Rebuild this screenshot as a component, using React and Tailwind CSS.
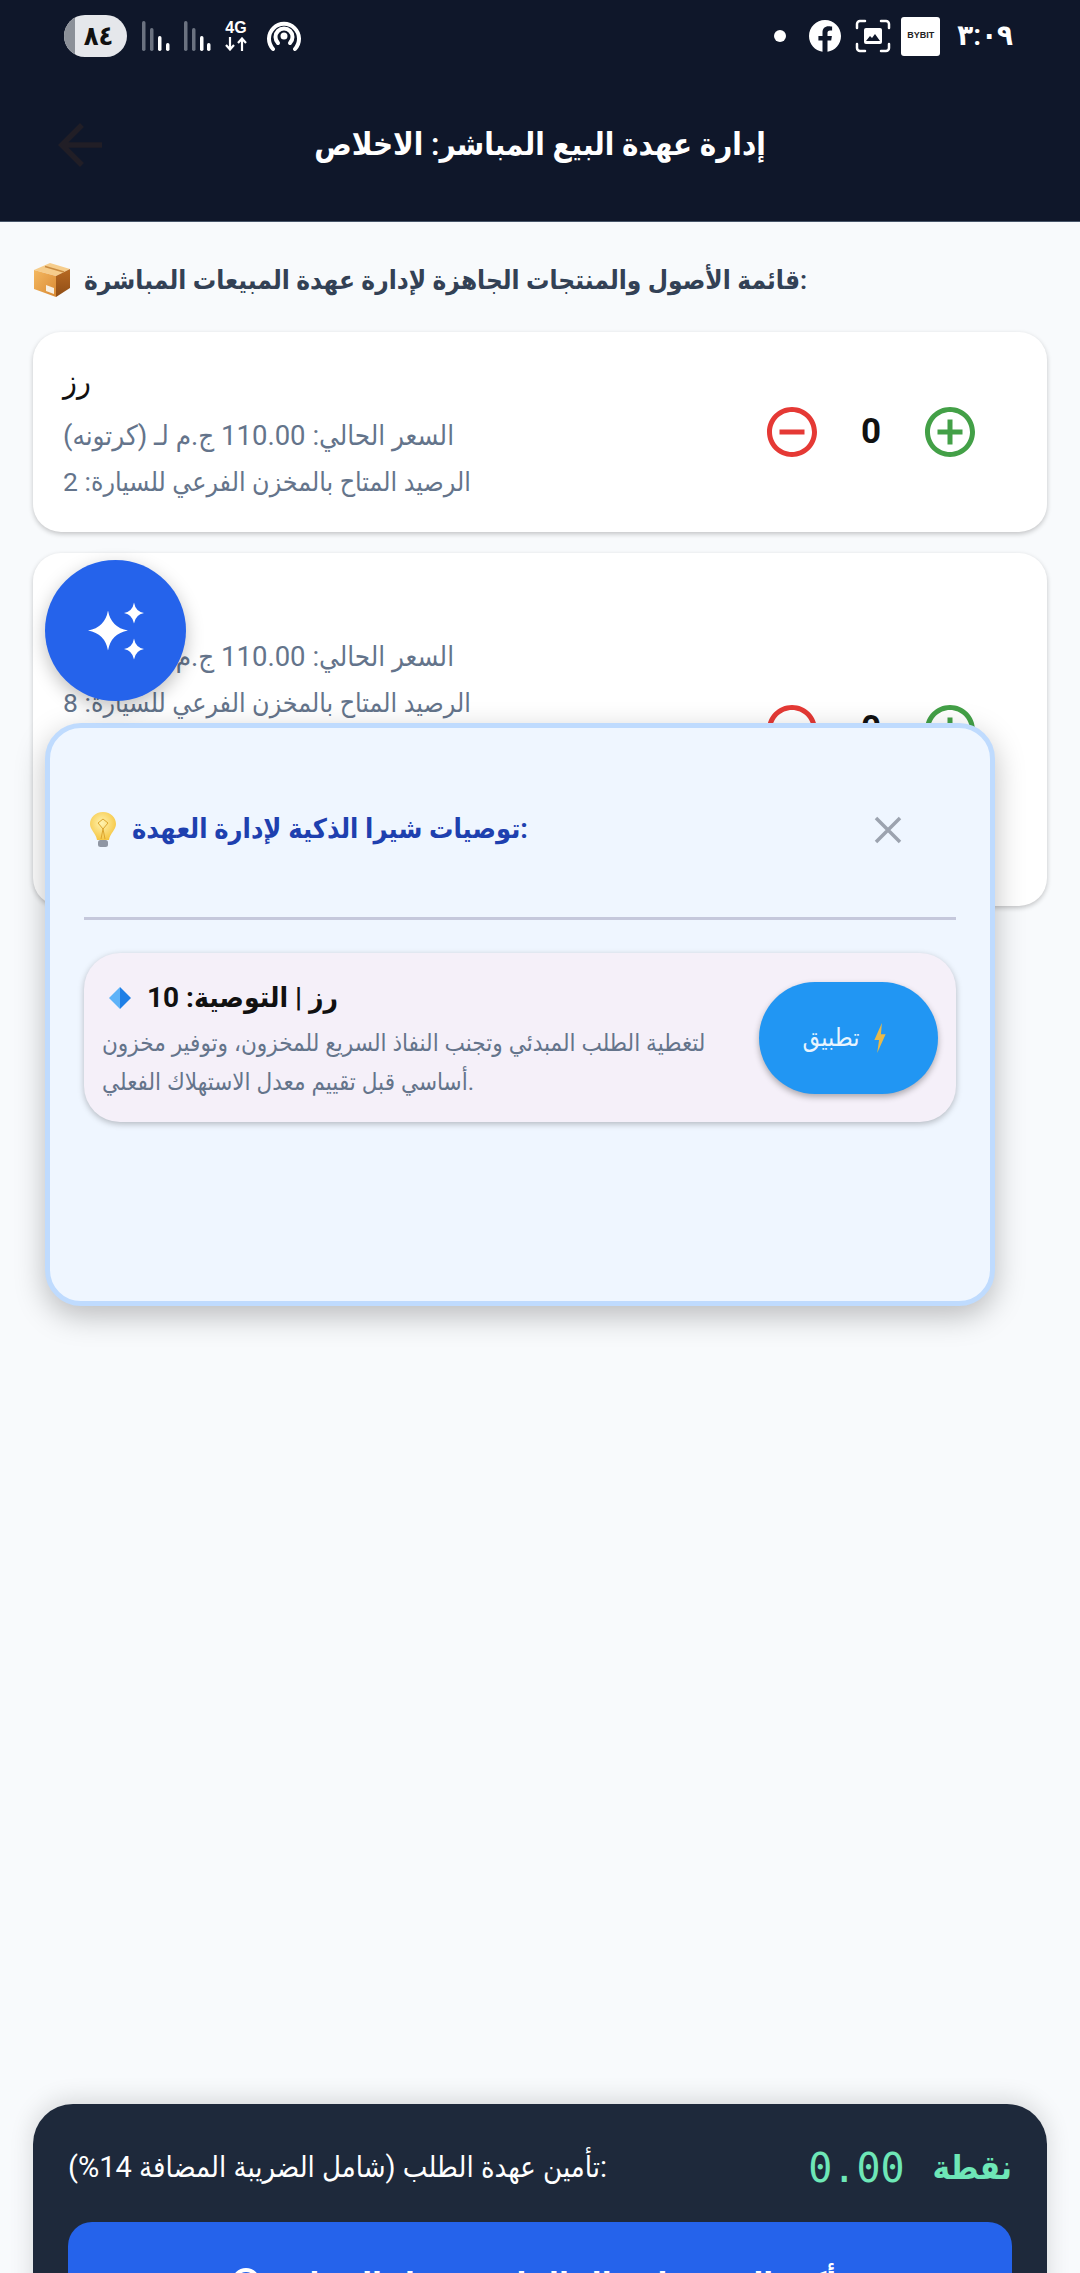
const ar = { fontFamily: 'Roboto, "DejaVu Sans Condensed", "DejaVu Sans", sans-serif' };

function MinusIcon() {
  return (
    <svg viewBox="0 0 24 24" className="w-[60px] h-[60px] text-[#e53935]" fill="currentColor">
      <path d="M7 11v2h10v-2H7zm5-9C6.48 2 2 6.48 2 12s4.48 10 10 10 10-4.48 10-10S17.52 2 12 2zm0 18c-4.41 0-8-3.59-8-8s3.59-8 8-8 8 3.59 8 8-3.59 8-8 8z" />
    </svg>
  );
}
function PlusIcon() {
  return (
    <svg viewBox="0 0 24 24" className="w-[60px] h-[60px] text-[#43a047]" fill="currentColor">
      <path d="M13 7h-2v4H7v2h4v4h2v-4h4v-2h-4V7zm-1-5C6.48 2 2 6.48 2 12s4.48 10 10 10 10-4.48 10-10S17.52 2 12 2zm0 18c-4.41 0-8-3.59-8-8s3.59-8 8-8 8 3.59 8 8-3.59 8-8 8z" />
    </svg>
  );
}
function Box() {
  return (
    <svg viewBox="0 0 38 36" className="w-[38px] h-[36px] shrink-0">
      <defs>
        <linearGradient id="boxl" x1="0" y1="0" x2="1" y2="1"><stop offset="0" stopColor="#f4b860" /><stop offset="1" stopColor="#d98a35" /></linearGradient>
        <linearGradient id="boxr" x1="0" y1="0" x2="0" y2="1"><stop offset="0" stopColor="#b86a22" /><stop offset="1" stopColor="#8f4d16" /></linearGradient>
      </defs>
      <path d="M1 8 L17 1 L37 7 L23 14Z" fill="#f6cd8c" />
      <path d="M1 8 L23 14 V35 L1 27Z" fill="url(#boxl)" />
      <path d="M23 14 L37 7 V26 L23 35Z" fill="url(#boxr)" />
      <path d="M12 4.500 L31 10" stroke="#c98a3f" strokeWidth="1.500" />
      <path d="M13 23 L21 26 V32 L13 29Z" fill="#f7efe2" />
    </svg>
  );
}
function Bulb() {
  return (
    <svg viewBox="0 0 28 38" className="w-[28px] h-[38px] shrink-0">
      <defs>
        <radialGradient id="bulbg" cx="0.45" cy="0.4" r="0.65"><stop offset="0" stopColor="#fff3b0" /><stop offset="1" stopColor="#f5c33b" /></radialGradient>
      </defs>
      <path d="M14 1 C6 1 1 7 1 13 C1 19 7 22 8 29 H20 C21 22 27 19 27 13 C27 7 22 1 14 1Z" fill="url(#bulbg)" />
      <path d="M9 12 L14 8 L19 12 L14 18 Z M14 18 L12 28 M14 18 L16 28" fill="none" stroke="#dca52e" strokeWidth="1" />
      <rect x="9" y="29" width="10" height="7" rx="2.500" fill="#8f96a3" />
    </svg>
  );
}
function Row({ name, stock, extra }) {
  return (
    <div className="flex items-center bg-white rounded-[28px] shadow-[0_2px_5px_rgba(0,0,0,0.22)] pl-[30px] pr-[67px] mb-[21px]">
      <div className={extra ? "flex-1 pt-[28px] pb-[180px]" : "flex-1 pt-[28px] pb-[27px]"}>
        <div className="text-[32px] leading-[42px] font-medium text-[#111]">{name}</div>
        <div className="text-[27.5px] leading-[46px] mt-[11px] text-[#64748b]">السعر الحالي: 110.00 ج.م لـ (كرتونه)</div>
        <div className="text-[26.5px] leading-[46px] text-[#64748b]">الرصيد المتاح بالمخزن الفرعي للسيارة: {stock}</div>
      </div>
      <div className="flex items-center">
        <MinusIcon />
        <div className="w-[98px] text-center text-[35px] font-bold text-[#111]">0</div>
        <PlusIcon />
      </div>
    </div>
  );
}

export default function App() {
  return (
    <div dir="ltr" style={ar} className="relative w-[1080px] h-[2273px] overflow-hidden bg-[#f8fafc] flex flex-col">
      <div className="bg-[#0f172a] h-[222px] shrink-0 border-b border-[#475569]">
        <div className="h-[72px] flex items-center justify-between pl-[64px] pr-[67px] text-white">
          <div className="flex items-center">
            <div className="relative overflow-hidden w-[63px] h-[42px] rounded-full bg-[#e5e7eb] text-[#111] text-[27px] font-semibold flex items-center justify-center mr-[14px]">
              <div className="absolute left-0 top-0 bottom-0 w-[11px] bg-[#8b9098]" />
              <span className="relative pl-[6px]">٨٤</span>
            </div>
            <svg viewBox="0 0 72 30" className="w-[72px] h-[30px] mr-[10px]">
              <g fill="#6b7280"><rect x="1" y="0" width="3.500" height="30" rx="1.700" /><rect x="9" y="7" width="3.500" height="23" rx="1.700" /></g>
              <rect x="17" y="15" width="3.500" height="15" rx="1.700" fill="#fff" />
              <rect x="25" y="22" width="3.500" height="8" rx="1.700" fill="#fff" />
              <g fill="#6b7280"><rect x="43" y="0" width="3.500" height="30" rx="1.700" /><rect x="51" y="7" width="3.500" height="23" rx="1.700" /></g>
              <rect x="59" y="15" width="3.500" height="15" rx="1.700" fill="#fff" />
              <rect x="66" y="22" width="3.500" height="8" rx="1.700" fill="#fff" />
            </svg>
            <div className="w-[26px] flex flex-col items-center mr-[18px] mt-[-2px]">
              <div className="text-[16px] leading-[15px] font-bold font-['Liberation_Sans',sans-serif]">4G</div>
              <svg viewBox="0 0 24 14" className="w-[24px] h-[14px] mt-[2px]" fill="none" stroke="#fff" strokeWidth="2.200">
                <path d="M6 0 V12 M2 8 L6 12.500 L10 8" />
                <path d="M18 14 V2 M14 6 L18 1.500 L22 6" />
              </svg>
            </div>
            <svg viewBox="0 0 34 32" className="w-[34px] h-[32px]" fill="none" stroke="#fff" strokeWidth="4" strokeLinecap="round">
              <path d="M6 29 A15 15 0 1 1 28 29" /><path d="M11 23 A8.500 8.500 0 1 1 23 23" /><circle cx="17" cy="16" r="1.500" fill="#fff" />
            </svg>
          </div>
          <div className="flex items-center">
            <div className="w-[12px] h-[12px] rounded-full bg-white mr-[23px]" />
            <svg viewBox="0 0 32 32" className="w-[32px] h-[32px] mr-[14px]" fill="#fff">
              <path d="M32 16C32 7.2 24.8 0 16 0S0 7.2 0 16c0 8 5.900 14.600 13.500 15.800V20.600H9.400V16h4.100v-3.500c0-4 2.400-6.200 6-6.200 1.800 0 3.600.3 3.600.3v3.900h-2c-2 0-2.600 1.200-2.600 2.500v3h4.400l-.7 4.600h-3.700v11.200C26.100 30.600 32 24 32 16z" />
            </svg>
            <svg viewBox="0 0 36 34" className="w-[36px] h-[34px] mr-[10px]" fill="none" stroke="#fff" strokeWidth="2.500" strokeLinecap="round">
              <path d="M2 9V5a3 3 0 0 1 3-3h5M26 2h5a3 3 0 0 1 3 3v4M34 25v4a3 3 0 0 1-3 3h-5M10 32H5a3 3 0 0 1-3-3v-4" />
              <rect x="9" y="9" width="18" height="16" rx="2" fill="#fff" stroke="none" />
              <path d="M11 22l4-5 2 2 3-4 5 7z" fill="#0f172a" stroke="none" />
            </svg>
            <div className="w-[39px] h-[39px] bg-white rounded-[3px] text-[#222] text-[9px] font-bold flex items-center justify-center mr-[17px] font-['Liberation_Sans',sans-serif]">BYBIT</div>
            <div className="text-[29px] font-semibold">٣:٠٩</div>
          </div>
        </div>
        <div className="relative h-[150px] flex items-center justify-center">
          <svg viewBox="0 0 24 24" className="absolute left-[47px] top-[40px] w-[66px] h-[66px]" fill="#211e26"><path d="M20 11H7.830l5.590-5.590L12 4l-8 8 8 8 1.410-1.410L7.830 13H20v-2z" /></svg>
          <h1 className="text-[31px] font-semibold text-white -mt-[4px]">إدارة عهدة البيع المباشر: الاخلاص</h1>
        </div>
      </div>
      <div className="flex-1 flex flex-col px-[33px] pt-[40px]">
        <div className="flex items-center gap-[13px] h-[36px] mb-[34px] text-[26px] font-semibold text-[#334155]">
          <Box />
          <span>قائمة الأصول والمنتجات الجاهزة لإدارة عهدة المبيعات المباشرة:</span>
        </div>
        <Row name="رز" stock="2" />
        <Row name="سكر" stock="8" extra />
        <div className="mt-auto -mb-[131px] shrink-0 h-[300px] bg-[#1e293b] rounded-[40px] shadow-[0_-4px_24px_rgba(0,0,0,0.14)] px-[35px] pt-[42px]">
          <div className="flex items-center justify-between h-[44px] mb-[32px]">
            <span className="text-[29px] text-white">تأمين عهدة الطلب (شامل الضريبة المضافة 14%):</span>
            <span className="flex items-center gap-[28px] text-[#6ee7b7] font-semibold text-[33px]">
              <span className="font-['DejaVu_Sans_Mono',monospace] font-normal text-[40px]">0.00</span>
              <span>نقطة</span>
            </span>
          </div>
          <div className="h-[110px] rounded-[24px] bg-[#2563eb] flex justify-center items-start gap-[14px] pt-[44px] text-[32px] leading-[36px] font-semibold text-white">
            <svg viewBox="0 0 28 28" className="w-[28px] h-[28px] mt-[2px]" fill="none" stroke="#fff" strokeWidth="4"><circle cx="14" cy="14" r="12" /></svg>
            <span>تأكيد الحجز وإرسال الفاتورة قبل التسليم</span>
          </div>
        </div>
      </div>

      <div className="absolute left-[45px] top-[560px] w-[141px] h-[141px] rounded-full bg-[#2563eb] shadow-[0_6px_18px_rgba(0,0,0,0.25)] flex items-center justify-center z-20">
        <svg viewBox="0 0 80 80" className="w-[80px] h-[80px]" fill="#fff">
          <path d="M32 19.500 Q35 36.500 52 39.500 Q35 42.500 32 59.500 Q29 42.500 12 39.500 Q29 36.500 32 19.500Z" />
          <path d="M58 11.500 Q59.500 20.500 68 22 Q59.500 23.500 58 32.500 Q56.500 23.500 48 22 Q56.500 20.500 58 11.500Z" />
          <path d="M58 47.500 Q59.500 56.500 68 58 Q59.500 59.500 58 68.500 Q56.500 59.500 48 58 Q56.500 56.500 58 47.500Z" />
        </svg>
      </div>

      <div className="absolute left-[45px] top-[723px] w-[950px] h-[583px] rounded-[36px] border-[5px] border-[#bfdbfe] bg-[#eff6ff] shadow-[0_10px_30px_rgba(0,0,0,0.25)] px-[34px] z-10">
        <div className="h-[192px] pt-[14px] flex items-center justify-between border-b-[3px] border-[#c5c8dc]">
          <div className="flex items-center gap-[15px] ml-[5px]">
            <Bulb />
            <span className="text-[27px] font-bold text-[#1e40af]">توصيات شيرا الذكية لإدارة العهدة:</span>
          </div>
          <svg viewBox="0 0 28 28" className="w-[28px] h-[28px] mr-[54px]" stroke="#9ca3af" strokeWidth="3.500" fill="none"><path d="M2 2 L26 26 M26 2 L2 26" /></svg>
        </div>
        <div className="mt-[33px] h-[169px] rounded-[36px] bg-[#f5f0f9] shadow-[0_2px_6px_rgba(0,0,0,0.25)] flex items-center justify-between pl-[18px] pr-[18px]">
          <div>
            <div className="flex items-center gap-[15px] ml-[6px] mt-[4px] text-[28px] font-bold text-[#111] leading-[40px]">
              <svg viewBox="0 0 24 24" className="w-[24px] h-[24px]">
                <path d="M12 1 L23 12 L12 23Z" fill="#1e7fe6" />
                <path d="M12 1 L1 12 L12 23Z" fill="#5db2f8" />
              </svg>
              <span>رز | التوصية: 10</span>
            </div>
            <div className="w-[625px] text-[24px] leading-[39px] mt-[6px] text-[#64748b]">لتغطية الطلب المبدئي وتجنب النفاذ السريع للمخزون، وتوفير مخزون أساسي قبل تقييم معدل الاستهلاك الفعلي.</div>
          </div>
          <div className="w-[179px] h-[112px] rounded-[56px] bg-[#2196f3] shadow-[0_3px_6px_rgba(0,0,0,0.3)] flex items-center justify-center gap-[13px] pr-[8px] text-[25px] text-[#e8f4fe]">
            <span>تطبيق</span>
            <svg viewBox="0 0 14 32" className="w-[14px] h-[30px]"><path d="M9 0 L1 18 H6 L4 32 L13 12 H8Z" fill="#e9b949" /></svg>
          </div>
        </div>
      </div>
    </div>
  );
}
